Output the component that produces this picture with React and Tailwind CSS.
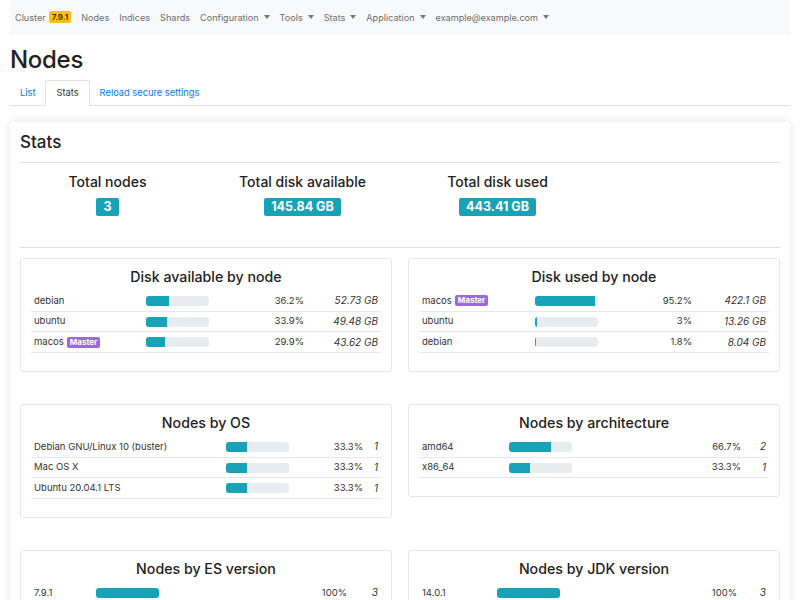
import React from "react";

const Caret = () => (
  <span className="inline-block ml-[5px] align-middle w-0 h-0 border-l-[3px] border-r-[3px] border-t-[4px] border-l-transparent border-r-transparent border-t-[#777]" />
);

const NavItem = ({ children, caret }) => (
  <span className="px-[5px] flex items-center text-[#6f6f6f]">
    {children}
    {caret && <Caret />}
  </span>
);

const Master = () => (
  <span className="ml-[3px] inline-block rounded-[2px] bg-[#9c6ad8] text-white text-[8px] font-bold leading-[11px] px-[3px] align-middle">
    Master
  </span>
);

const Bar = ({ pct }) => (
  <div className="w-[63px] h-[10px] rounded-[3px] bg-[#e9ecef] overflow-hidden shrink-0">
    <div className="h-full bg-[#17a2b8]" style={{ width: pct + "%" }} />
  </div>
);

const StatCard = ({ title, nameW, lastW, rows }) => (
  <div className="border border-[#e3e6ea] rounded-[3px] px-[10px] pt-[9px] pb-[8px] bg-white">
    <div className="text-center text-[14.2px] font-medium leading-[18px] text-[#222] mb-[5px]">{title}</div>
    <div className="mb-[10px]">
      {rows.map((r, i) => (
        <div key={i} className="flex items-center h-[20.7px] px-[3px] border-b border-[#e6e8eb] text-[9.5px] text-[#333]">
          <div className="flex items-center shrink-0" style={{ width: nameW }}>
            {r.name}
            {r.master && <Master />}
          </div>
          <Bar pct={r.pct} />
          <div className="flex-1 text-right">{r.label}</div>
          <div className="text-right italic shrink-0 text-[10px]" style={{ width: lastW }}>{r.value}</div>
        </div>
      ))}
    </div>
  </div>
);

export default function App() {
  return (
    <div className="bg-white min-h-[600px] overflow-hidden" style={{ fontFamily: "Inter, 'Noto Sans', sans-serif" }}>
      <div className="mx-[10px]">
        {/* Navbar */}
        <div className="h-[35px] bg-[#f8f9fa] flex items-center text-[9.1px]">
          <NavItem>
            Cluster
            <span className="ml-[3px] rounded-[2px] bg-[#ffc107] text-[#333] text-[8px] font-bold px-[3px] leading-[12px]">7.9.1</span>
          </NavItem>
          <NavItem>Nodes</NavItem>
          <NavItem>Indices</NavItem>
          <NavItem>Shards</NavItem>
          <NavItem caret>Configuration</NavItem>
          <NavItem caret>Tools</NavItem>
          <NavItem caret>Stats</NavItem>
          <NavItem caret>Application</NavItem>
          <NavItem caret>example@example.com</NavItem>
        </div>

        {/* Title */}
        <h1 className="mt-[10px] text-[24px] tracking-[-0.3px] font-medium leading-[30px] text-[#222]">Nodes</h1>

        {/* Tabs */}
        <div className="mt-[5px] flex border-b border-[#dee2e6] text-[9.3px] h-[26px]">
          <span className="px-[10px] flex items-center text-[#007bff]">List</span>
          <span className="px-[10px] flex items-center text-[#333] border border-[#dee2e6] border-b-white rounded-t-[3px] mb-[-1px] bg-white">Stats</span>
          <span className="px-[10px] flex items-center text-[#007bff]">Reload secure settings</span>
        </div>

        {/* Stats card */}
        <div className="mt-[16px] bg-white rounded-[3px] shadow-[0_0_10px_rgba(0,0,0,0.12)] p-[10px]">
          <div className="text-[17px] font-medium leading-[20px] text-[#222]">Stats</div>
          <div className="mt-[10px] border-t border-[#dcdfe3]" />
          <div className="grid grid-cols-4 mx-[-10px] pt-[9px] h-[84px]">
            {[
              ["Total nodes", "3"],
              ["Total disk available", "145.84 GB"],
              ["Total disk used", "443.41 GB"],
            ].map(([t, v]) => (
              <div key={t} className="flex flex-col items-center">
                <div className="text-[14px] font-medium leading-[20px] text-[#222]">{t}</div>
                <span className="mt-[6px] rounded-[2px] bg-[#17a2b8] text-white text-[12.5px] font-bold leading-[18px] px-[7px]">{v}</span>
              </div>
            ))}
          </div>
          <div className="border-t border-[#dcdfe3]" />

          <div className="mt-[10px] grid grid-cols-2 gap-x-[16px] gap-y-[32px] items-start">
            <StatCard
              title="Disk available by node"
              nameW={112}
              lastW={74}
              rows={[
                { name: "debian", pct: 36.2, label: "36.2%", value: "52.73 GB" },
                { name: "ubuntu", pct: 33.9, label: "33.9%", value: "49.48 GB" },
                { name: "macos", master: true, pct: 29.9, label: "29.9%", value: "43.62 GB" },
              ]}
            />
            <StatCard
              title="Disk used by node"
              nameW={113}
              lastW={74}
              rows={[
                { name: "macos", master: true, pct: 95.2, label: "95.2%", value: "422.1 GB" },
                { name: "ubuntu", pct: 3, label: "3%", value: "13.26 GB" },
                { name: "debian", pct: 1.8, label: "1.8%", value: "8.04 GB" },
              ]}
            />
            <StatCard
              title="Nodes by OS"
              nameW={192}
              lastW={15}
              rows={[
                { name: "Debian GNU/Linux 10 (buster)", pct: 33.3, label: "33.3%", value: "1" },
                { name: "Mac OS X", pct: 33.3, label: "33.3%", value: "1" },
                { name: "Ubuntu 20.04.1 LTS", pct: 33.3, label: "33.3%", value: "1" },
              ]}
            />
            <StatCard
              title="Nodes by architecture"
              nameW={87}
              lastW={25}
              rows={[
                { name: "amd64", pct: 66.7, label: "66.7%", value: "2" },
                { name: "x86_64", pct: 33.3, label: "33.3%", value: "1" },
              ]}
            />
            <StatCard
              title="Nodes by ES version"
              nameW={62}
              lastW={31}
              rows={[{ name: "7.9.1", pct: 100, label: "100%", value: "3" }]}
            />
            <StatCard
              title="Nodes by JDK version"
              nameW={75}
              lastW={29}
              rows={[{ name: "14.0.1", pct: 100, label: "100%", value: "3" }]}
            />
          </div>
        </div>
      </div>
    </div>
  );
}
